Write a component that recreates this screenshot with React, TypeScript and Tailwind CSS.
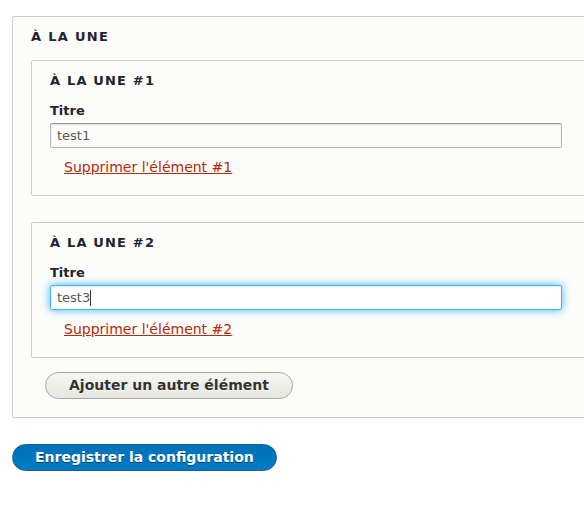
import React from 'react'

// Drupal "Seven"-style config form: nested fieldsets with text fields

interface ItemProps {
  index: number
  value: string
  focused?: boolean
}

const Item: React.FC<ItemProps> = ({ index, value, focused = false }) => {
  return (
    <div className="border border-[#ccc] rounded-[2px] bg-[#fcfcfa] pl-[18px] pb-[18px]">
      <div className="mt-[10px] leading-[20px] font-bold uppercase tracking-[0.09em] text-[#222330]">
        À la une #{index}
      </div>
      <div className="mt-[10px] leading-[20px] font-bold text-[#222330]">Titre</div>
      <div
        className={`mt-[2px] w-[512px] h-[25px] flex items-center pl-[6px] rounded-[2px] border text-[#595959] ${
          focused
            ? 'bg-white border-[#40b6ff] shadow-[inset_0_1px_2px_rgba(0,0,0,0.1),0_0_8px_#40b6ff]'
            : 'bg-[#fcfcfa] border-[#b8b8b8] border-t-[#999] shadow-[inset_0_1px_2px_rgba(0,0,0,0.125)]'
        }`}
      >
        <span>{value}</span>
        {focused && <span className="w-px h-[16px] bg-[#333]" />}
      </div>
      <div className="mt-[9px] ml-[14px] leading-[20px] text-[14px] text-[#b5290c] underline">
        Supprimer l'élément #{index}
      </div>
    </div>
  )
}

export default function App() {
  return (
    <div className="min-h-screen w-full overflow-hidden bg-white pl-3 pt-4 font-['DejaVu_Sans',sans-serif] text-[13px]">
      <div className="w-[640px] border border-[#ccc] rounded-[2px] bg-[#fcfcfa] pl-[18px] pb-[18px]">
        <div className="mt-[10px] leading-[20px] font-bold uppercase tracking-[0.1em] text-[#222330]">
          À la une
        </div>
        <div className="mt-[13px]">
          <Item index={1} value="test1" />
        </div>
        <div className="mt-[26px]">
          <Item index={2} value="test3" focused />
        </div>
        <button className="mt-[14px] ml-[14px] rounded-full border border-[#a6a6a6] bg-gradient-to-b from-[#f6f6f3] to-[#e7e7df] px-[23px] py-1 text-[14px] leading-[17px] font-bold text-[#333] [text-shadow:0_1px_rgba(255,255,255,0.6)]">
          Ajouter un autre élément
        </button>
      </div>
      <button className="mt-[26px] rounded-full border border-[#1e5c90] bg-gradient-to-t from-[#007bc6] to-[#0071b8] px-[22px] py-1 text-[14px] leading-[17px] font-bold text-white [text-shadow:0_1px_rgba(0,0,0,0.5)]">
        Enregistrer la configuration
      </button>
    </div>
  )
}
